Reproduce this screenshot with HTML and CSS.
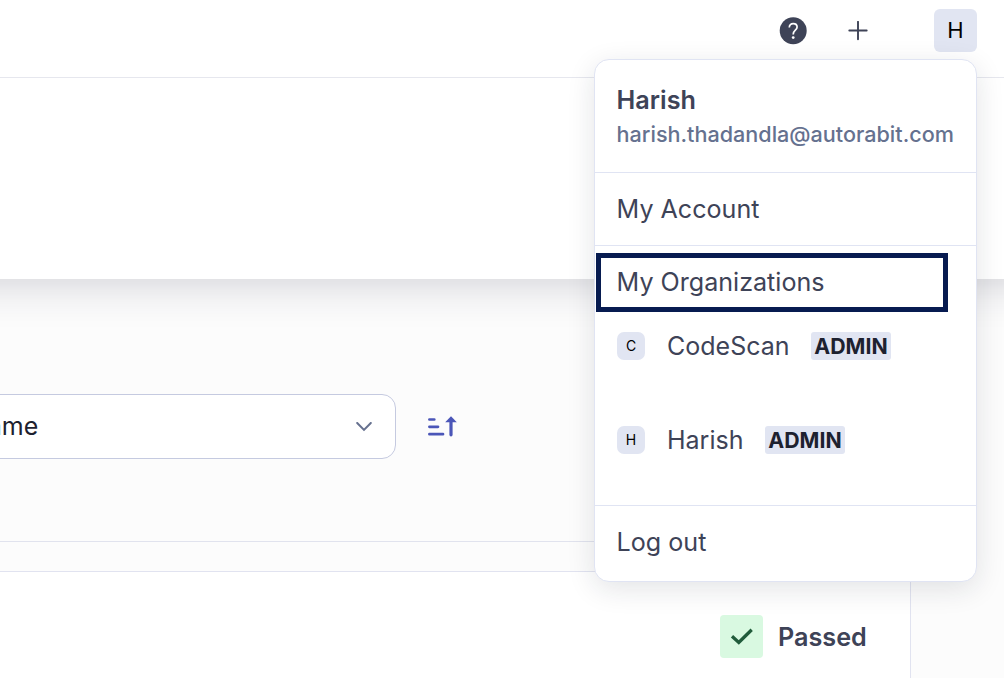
FILE: index.html
```html
<!DOCTYPE html>
<html lang="en">
<head>
<meta charset="utf-8">
<title>Projects</title>
<link rel="stylesheet" href="styles.css">
</head>
<body>
<div class="page">
  <header class="topbar">
    <svg class="help-icon" viewBox="0 0 28 28"><circle cx="14.2" cy="13.8" r="13.5" fill="#3e4357"/><path d="M10.3 10.4C10.3 8 11.9 6.6 14.2 6.6C16.5 6.6 18.1 8 18.1 10.1C18.1 13.3 14.2 13.3 14.2 17.4" fill="none" stroke="#fff" stroke-width="1.7"/><circle cx="14.2" cy="20.6" r="1.4" fill="#fff"/></svg>
    <svg class="plus-icon" viewBox="0 0 20 20"><path d="M10 .8V18.2M1.3 9.5H18.7" stroke="#3e4357" stroke-width="1.9" stroke-linecap="round"/></svg>
    <div class="avatar">H</div>
  </header>
  <div class="banner"></div>
  <main class="content">
    <div class="toolbar">
      <div class="select"><span class="select-value">Name</span><svg class="chevron" viewBox="0 0 16 10"><path d="M1.2 1L8 7.9L14.8 1" fill="none" stroke="#66718f" stroke-width="2" stroke-linecap="round"/></svg></div>
      <svg class="sort-icon" viewBox="0 0 30 22"><path d="M1.4 3.5H6.3M1.4 10.8H10M1.4 18.2H15" stroke="#4b56b8" stroke-width="2.7" stroke-linecap="round"/><path d="M23 18.8V4" stroke="#4b56b8" stroke-width="3.2" stroke-linecap="round"/><path d="M23 .2L28.8 6.3H17.2Z" fill="#4b56b8"/></svg>
    </div>
    <div class="results">
      <div class="gap-row"></div>
      <section class="card">
        <div class="status"><svg class="check" viewBox="0 0 43 43"><path d="M12 21.3L18.8 27.4L31.7 14.8" fill="none" stroke="#215c3b" stroke-width="3.3"/></svg></div>
        <span class="status-text">Passed</span>
      </section>
    </div>
  </main>
  <div class="menu">
    <div class="menu-user"><div class="user-name">Harish</div><div class="user-email">harish.thadandla@autorabit.com</div></div>
    <div class="menu-item account"><span class="label">My Account</span></div>
    <div class="orgs">
      <div class="orgs-title"><span class="label label-orgs">My Organizations</span></div>
      <div class="org"><span class="org-avatar">C</span><span class="org-name org-code">CodeScan</span><span class="badge">ADMIN</span></div>
      <div class="org org-last"><span class="org-avatar">H</span><span class="org-name org-harish">Harish</span><span class="badge">ADMIN</span></div>
    </div>
    <div class="menu-item logout"><span class="label">Log out</span></div>
  </div>
</div>
</body>
</html>
```

FILE: styles.css
```css
* { box-sizing: border-box; }
body { margin: 0; font-family: Inter, "Liberation Sans", sans-serif; color: #3e4357; }
.page { position: relative; width: 1004px; height: 678px; overflow: hidden; background: #fcfcfc; }
.topbar { height: 78px; padding: 9px 27px 0 779px; display: flex; align-items: flex-start; background: #fff; border-bottom: 1px solid #e6e7ee; }
.help-icon { width: 28px; height: 28px; margin-top: 8px; }
.plus-icon { width: 20px; height: 20px; margin: 12px 0 0 41px; }
.avatar { width: 43px; height: 43px; margin-left: auto; border-radius: 6px; background: #e1e5f2; color: #000; font-size: 22px; line-height: 42px; text-align: center; }
.banner { height: 201px; margin: 0 -80px; background: #fff; box-shadow: 0 4px 42px rgba(28, 28, 60, .2); clip-path: inset(0 0 -60px 0); }
.content { height: 399px; padding-top: 115px; }
.toolbar { display: flex; align-items: center; height: 65px; }
.select { width: 416px; height: 65px; margin-left: -20px; padding: 0 23px 0 0; display: flex; align-items: center; justify-content: space-between; background: #fff; border: 1px solid #c5cae0; border-radius: 14px; }
.select-value { font-size: 25px; line-height: 30px; color: #1d212f; margin: -2px 0 0 -12px; }
.chevron { width: 16px; height: 10px; }
.sort-icon { width: 30px; height: 22px; margin-left: 32px; }
.results { width: 911px; height: 137px; margin-top: 82px; border-top: 1px solid #e1e3ee; }
.gap-row { height: 29px; }
.card { height: 107px; padding: 43px 0 0 720px; display: flex; gap: 15px; background: #fff; border: solid #e1e3f0; border-width: 1px 1px 0 0; }
.status { width: 43px; height: 43px; flex: none; background: #d9f9e1; border-radius: 4px; }
.check { display: block; width: 43px; height: 43px; }
.status-text { font-size: 25.2px; font-weight: 600; line-height: 45px; }
.menu { position: absolute; left: 594px; top: 59px; width: 383px; height: 523px; background: #fff; border: 1px solid #e0e4f3; border-radius: 15px; box-shadow: 0 7px 28px rgba(25, 30, 50, .12); }
.menu-user { height: 113px; padding: 24px 0 0 21.6px; border-bottom: 1px solid #e0e4f3; white-space: nowrap; }
.user-name { font-size: 25.2px; font-weight: 600; line-height: 32px; }
.user-email { font-size: 21.6px; font-weight: 500; line-height: 32px; margin-top: 2px; color: #65718f; }
.menu-item { padding-left: 21.6px; font-size: 25.1px; }
.account { height: 73px; line-height: 72px; border-bottom: 1px solid #e0e4f3; }
.orgs { height: 260px; padding: 7px 0 0 1px; border-bottom: 1px solid #e0e4f3; }
.orgs-title { width: 352px; height: 59px; padding-left: 15.6px; border: 5px solid #071b50; font-size: 25.1px; line-height: 49px; }
.org { display: flex; align-items: center; height: 28px; margin-top: 20px; padding-left: 21px; }
.org-last { margin-top: 66px; }
.org-avatar { width: 28px; height: 28px; border-radius: 7px; background: #e1e5f2; color: #000; font-size: 14px; line-height: 28px; text-align: center; }
.org-name { margin-left: 22px; font-size: 25px; line-height: 28px; }
.org-code { width: 144px; }
.org-harish { width: 98px; }
.badge { width: 80px; height: 28px; border-radius: 3px; background: #e1e5f2; color: #1d212f; font-size: 21.3px; font-weight: 700; line-height: 28px; text-align: center; }
.logout { height: 74px; line-height: 73px; }
```
